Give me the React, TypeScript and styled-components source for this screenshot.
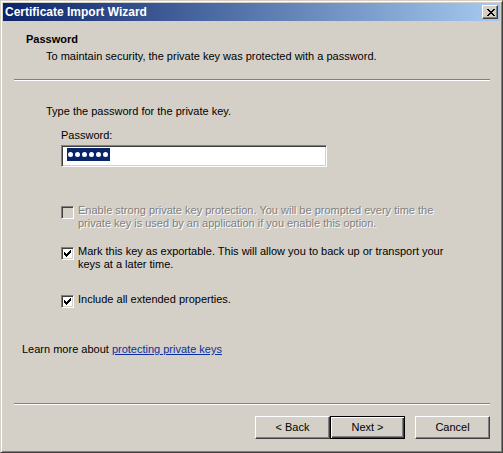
import React from 'react';
import styled, { createGlobalStyle } from 'styled-components';

const GlobalStyle = createGlobalStyle`
  html, body {
    margin: 0;
    padding: 0;
    background: #d4d0c8;
  }
`;

const FACE = '#d4d0c8';
const SHADOW = '#808080';
const DARK = '#404040';

const CheckGlyph = () => (
  <svg width="7" height="7" viewBox="0 0 7 7" shapeRendering="crispEdges">
    <path
      d="M0 2h1v3H0zM1 3h1v3H1zM2 4h1v3H2zM3 3h1v3H3zM4 2h1v3H4zM5 1h1v3H5zM6 0h1v3H6z"
      fill="#000"
    />
  </svg>
);

const CloseGlyph = () => (
  <svg width="8" height="7" viewBox="0 0 8 7" shapeRendering="crispEdges">
    <path
      d="M0 0h2v1H0zM6 0h2v1H6zM1 1h2v1H1zM5 1h2v1H5zM2 2h4v1H2zM3 3h2v1H3zM2 4h4v1H2zM1 5h2v1H1zM5 5h2v1H5zM0 6h2v1H0zM6 6h2v1H6z"
      fill="#000"
    />
  </svg>
);

type CheckOptionProps = {
  checked?: boolean;
  disabled?: boolean;
  top: number;
  children: React.ReactNode;
};

const CheckOption = ({ checked, disabled, top, children }: CheckOptionProps) => (
  <CheckRow $top={top}>
    <CheckBox $disabled={disabled}>{checked && <CheckGlyph />}</CheckBox>
    <CheckLabel $disabled={disabled}>{children}</CheckLabel>
  </CheckRow>
);

const App = () => {
  return (
    <>
      <GlobalStyle />
      <Window>
        <TitleBar>
          <TitleText>Certificate Import Wizard</TitleText>
          <CloseButton aria-label="Close">
            <CloseGlyph />
          </CloseButton>
        </TitleBar>

        <Header>
          <HeaderTitle>Password</HeaderTitle>
          <HeaderText>
            To maintain security, the private key was protected with a password.
          </HeaderText>
        </Header>

        <Separator $top={16} />

        <Body>
          <Instruction>Type the password for the private key.</Instruction>
          <FieldLabel>Password:</FieldLabel>
          <PasswordField>
            <Selection>
              {Array.from({ length: 6 }).map((_, i) => (
                <Dot key={i} />
              ))}
            </Selection>
          </PasswordField>

          <CheckOption disabled top={37}>
            Enable strong private key protection. You will be prompted every time the
            private key is used by an application if you enable this option.
          </CheckOption>
          <CheckOption checked top={15}>
            Mark this key as exportable. This will allow you to back up or transport your
            keys at a later time.
          </CheckOption>
          <CheckOption checked top={22}>
            Include all extended properties.
          </CheckOption>

          <LearnMore>
            Learn more about <Link href="#">protecting private keys</Link>
          </LearnMore>
        </Body>

        <Footer>
          <Separator $top={0} />
          <ButtonRow>
            <ButtonPair>
              <PushButton>&lt; Back</PushButton>
              <PushButton $default>Next &gt;</PushButton>
            </ButtonPair>
            <PushButton>Cancel</PushButton>
          </ButtonRow>
        </Footer>
      </Window>
    </>
  );
};

export default App;

const Window = styled.div`
  width: 503px;
  height: 453px;
  box-sizing: border-box;
  border: 1px solid;
  border-color: ${FACE} ${DARK} ${DARK} ${FACE};
  box-shadow: inset 1px 1px #fff, inset -1px -1px ${SHADOW};
  padding: 2px;
  background: ${FACE};
  display: flex;
  flex-direction: column;
  font-family: 'Liberation Sans', Arial, sans-serif;
  font-size: 11px;
  line-height: 13px;
  color: #000;
`;

const TitleBar = styled.div`
  height: 18px;
  flex-shrink: 0;
  display: flex;
  align-items: center;
  justify-content: space-between;
  padding: 0 2px;
  background: linear-gradient(to right, #0a246a, #a6caf0);
`;

const TitleText = styled.span`
  font-size: 12px;
  line-height: 14px;
  font-weight: bold;
  color: #fff;
  white-space: nowrap;
`;

const CloseButton = styled.button`
  width: 16px;
  height: 14px;
  box-sizing: border-box;
  padding: 0 0 0 1px;
  margin: 0;
  border: 1px solid;
  border-color: #fff ${DARK} ${DARK} #fff;
  box-shadow: inset -1px -1px ${SHADOW};
  background: ${FACE};
  display: flex;
  align-items: center;
  justify-content: center;
`;

const Header = styled.div`
  padding: 12px 0 0 23px;
`;

const HeaderTitle = styled.div`
  font-weight: bold;
`;

const HeaderText = styled.div`
  margin: 4px 0 0 20px;
`;

const Separator = styled.div<{ $top: number }>`
  height: 0;
  margin: ${(p) => p.$top}px 10px 0 11px;
  border-top: 1px solid ${SHADOW};
  border-bottom: 1px solid #fff;
`;

const Body = styled.div`
  display: flex;
  flex-direction: column;
`;

const Instruction = styled.div`
  margin: 24px 0 0 43px;
`;

const FieldLabel = styled.div`
  margin: 11px 0 0 58px;
`;

const PasswordField = styled.div`
  width: 266px;
  height: 22px;
  box-sizing: border-box;
  margin: 3px 0 0 58px;
  border: 1px solid;
  border-color: ${SHADOW} #fff #fff ${SHADOW};
  box-shadow: inset 1px 1px ${DARK}, inset -1px -1px ${FACE};
  background: #fff;
  padding: 2px 0 0 5px;
  display: flex;
  align-items: flex-start;
`;

const Selection = styled.span`
  height: 13px;
  display: flex;
  align-items: center;
  gap: 2px;
  padding: 0 2px 0 1px;
  background: #0a246a;
`;

const Dot = styled.span`
  width: 5px;
  height: 5px;
  border-radius: 50%;
  background: #fff;
`;

const CheckRow = styled.div<{ $top: number }>`
  display: flex;
  align-items: flex-start;
  gap: 4px;
  margin: ${(p) => p.$top}px 0 0 58px;
`;

const CheckBox = styled.span<{ $disabled?: boolean }>`
  width: 13px;
  height: 13px;
  flex-shrink: 0;
  box-sizing: border-box;
  margin-top: 2px;
  border: 1px solid;
  border-color: ${SHADOW} #fff #fff ${SHADOW};
  box-shadow: inset 1px 1px ${DARK}, inset -1px -1px ${FACE};
  background: ${(p) => (p.$disabled ? FACE : '#fff')};
  display: flex;
  align-items: center;
  justify-content: center;
`;

const CheckLabel = styled.span<{ $disabled?: boolean }>`
  width: 372px;
  color: ${(p) => (p.$disabled ? SHADOW : '#000')};
  text-shadow: ${(p) => (p.$disabled ? '1px 1px 0 #fff' : 'none')};
`;

const LearnMore = styled.div`
  margin: 35px 0 0 19px;
`;

const Link = styled.a`
  color: #0b2fa0;
  text-decoration: underline;
`;

const Footer = styled.div`
  margin-top: auto;
  display: flex;
  flex-direction: column;
`;

const ButtonRow = styled.div`
  display: flex;
  justify-content: flex-end;
  gap: 10px;
  padding: 11px 10px 11px 0;
`;

const ButtonPair = styled.div`
  display: flex;
`;

const PushButton = styled.button<{ $default?: boolean }>`
  width: 75px;
  height: 23px;
  box-sizing: border-box;
  margin: 0;
  padding: 0;
  background: ${FACE};
  font-family: 'Liberation Sans', Arial, sans-serif;
  font-size: 11px;
  line-height: 13px;
  color: #000;
  border: 1px solid;
  border-color: ${(p) => (p.$default ? '#000' : `#fff ${DARK} ${DARK} #fff`)};
  box-shadow: ${(p) =>
    p.$default
      ? `inset 1px 1px #fff, inset -1px -1px ${DARK}, inset -2px -2px ${SHADOW}`
      : `inset -1px -1px ${SHADOW}`};
`;
